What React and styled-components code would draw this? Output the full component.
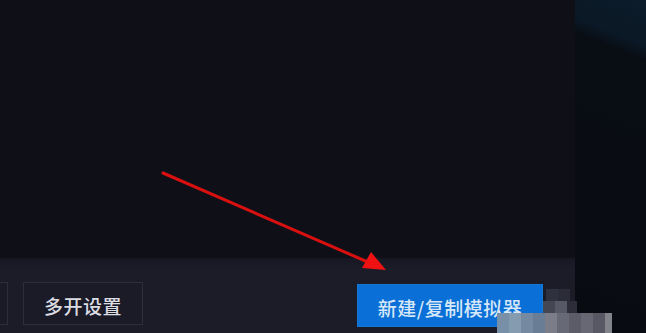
import React from 'react';
import styled, { createGlobalStyle } from 'styled-components';

const GlobalStyle = createGlobalStyle`
    html, body {
        margin: 0;
        padding: 0;
        background: #0f1017;
        overflow: hidden;
    }
`;

const Screen = styled.div`
    position: relative;
    display: flex;
    width: 646px;
    height: 333px;
    overflow: hidden;
    font-family: 'Noto Sans CJK SC', 'Noto Sans', sans-serif;
`;

const Panel = styled.div`
    display: flex;
    flex-direction: column;
    width: 575px;
    height: 100%;
`;

const Body = styled.div`
    flex: 1;
    background: #0f1017;
`;

const Footer = styled.div`
    display: flex;
    align-items: flex-start;
    gap: 15px;
    height: 75px;
    box-sizing: border-box;
    padding: 24px 32px 0 0;
    background: linear-gradient(180deg, #161722 0%, #1b1c28 12%, #1b1c28 100%);
`;

const Button = styled.button`
    display: flex;
    align-items: center;
    justify-content: center;
    box-sizing: border-box;
    height: 43px;
    width: ${p => p.$width}px;
    margin-left: ${p => p.$offset || 0};
    margin-top: ${p => p.$primary ? '2px' : '0'};
    padding: 3px 0 0;
    border: 1px solid ${p => p.$primary ? '#1278d6' : '#2c2e3c'};
    background: ${p => p.$primary ? '#0a6fd6' : '#1a1b27'};
    color: ${p => p.$primary ? '#d6e8f8' : '#dcdde3'};
    font-family: inherit;
    font-size: 19px;
    font-weight: 500;
    letter-spacing: 0.5px;
    cursor: pointer;
`;

const Backdrop = styled.div`
    flex: 1;
    background: linear-gradient(202deg, #0c1c2a 0%, #0b1825 13%, #090d14 17%, #080b10 100%);
`;

const Overlay = styled.svg`
    position: absolute;
    left: 0;
    top: 0;
    pointer-events: none;
`;

const mosaic = [
    [546, 289, 12, 12, '#44455384'],
    [558, 289, 12, 12, '#3a3b4888'],
    [543, 301, 12, 12, '#65667390'],
    [555, 301, 12, 12, '#585966'],
    [567, 301, 10, 12, '#2c2d38'],
    [497, 313, 12, 20, '#7790a8'],
    [509, 313, 12, 20, '#859bb0'],
    [521, 313, 12, 20, '#7589a0'],
    [533, 313, 12, 20, '#697e95'],
    [545, 313, 12, 20, '#7d7d8a'],
    [557, 313, 12, 20, '#686976'],
    [569, 313, 12, 20, '#5b5c68'],
    [581, 313, 12, 20, '#676873'],
    [593, 313, 12, 20, '#575863'],
    [605, 313, 7, 20, '#83838c'],
];

const App = () => {
    return (
        <>
            <GlobalStyle />
            <Screen>
                <Panel>
                    <Body />
                    <Footer>
                        <Button $width={120} $offset={'-112px'}> </Button>
                        <Button $width={120}>多开设置</Button>
                        <Button $width={186} $primary $offset={'auto'}>新建/复制模拟器</Button>
                    </Footer>
                </Panel>
                <Backdrop />
                <Overlay width="646" height="333" viewBox="0 0 646 333">
                    {mosaic.map(([x, y, w, h, c], i) => (
                        <rect key={i} x={x} y={y} width={w} height={h} fill={c} />
                    ))}
                    <line x1="163" y1="173" x2="370" y2="263" stroke="#d81010" strokeWidth="3" strokeLinecap="round" />
                    <polygon points="386,270 362,268 371,252" fill="#f01212" />
                </Overlay>
            </Screen>
        </>
    );
};

export default App;
